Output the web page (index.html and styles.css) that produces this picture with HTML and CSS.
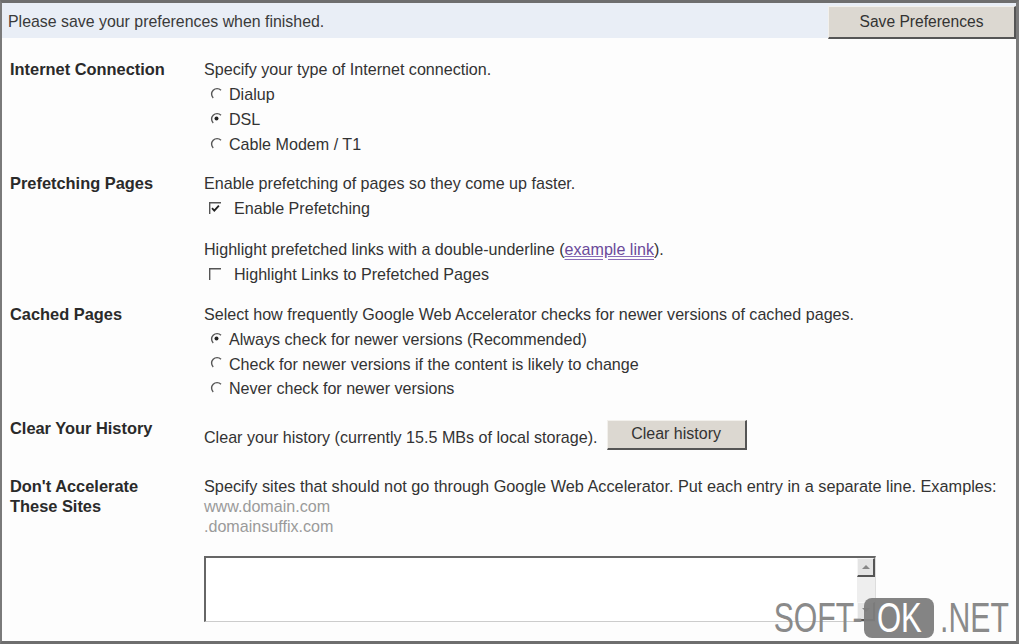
FILE: index.html
```html
<!DOCTYPE html>
<html>
<head>
<meta charset="utf-8">
<link rel="stylesheet" href="styles.css">
</head>
<body>
<div class="frame">
  <div class="topbar">
    <span class="topnote">Please save your preferences when finished.</span>
    <button class="btn btn-save">Save Preferences</button>
  </div>

  <div class="section s-conn">
    <div class="label">Internet Connection</div>
    <div class="content">
      <div class="desc">Specify your type of Internet connection.</div>
      <div class="opt"><svg class="radio" viewBox="0 0 13 13"><path d="M11 3.2A5.5 5.5 0 1 0 3.2 11" fill="none" stroke="#555" stroke-width="1.4"/></svg><span>Dialup</span></div>
      <div class="opt"><svg class="radio" viewBox="0 0 13 13"><path d="M11 3.2A5.5 5.5 0 1 0 3.2 11" fill="none" stroke="#555" stroke-width="1.4"/><circle cx="6.5" cy="6.5" r="2" fill="#222"/></svg><span>DSL</span></div>
      <div class="opt"><svg class="radio" viewBox="0 0 13 13"><path d="M11 3.2A5.5 5.5 0 1 0 3.2 11" fill="none" stroke="#555" stroke-width="1.4"/></svg><span>Cable Modem / T1</span></div>
    </div>
  </div>

  <div class="section s-pref">
    <div class="label">Prefetching Pages</div>
    <div class="content">
      <div class="desc">Enable prefetching of pages so they come up faster.</div>
      <div class="opt chk"><svg class="check" viewBox="0 0 13 13"><path d="M0.7 12V0.7H12" fill="none" stroke="#555" stroke-width="1.4"/><path d="M3 6.2l2.3 2.4 4.6-5" fill="none" stroke="#222" stroke-width="1.8"/></svg><span>Enable Prefetching</span></div>
      <div class="desc gap">Highlight prefetched links with a double-underline (<a class="exlink" href="#">example link</a>).</div>
      <div class="opt chk"><svg class="check" viewBox="0 0 13 13"><path d="M0.7 12V0.7H12" fill="none" stroke="#555" stroke-width="1.4"/></svg><span>Highlight Links to Prefetched Pages</span></div>
    </div>
  </div>

  <div class="section s-cache">
    <div class="label">Cached Pages</div>
    <div class="content tight">
      <div class="desc">Select how frequently Google Web Accelerator checks for newer versions of cached pages.</div>
      <div class="opt"><svg class="radio" viewBox="0 0 13 13"><path d="M11 3.2A5.5 5.5 0 1 0 3.2 11" fill="none" stroke="#555" stroke-width="1.4"/><circle cx="6.5" cy="6.5" r="2" fill="#222"/></svg><span>Always check for newer versions (Recommended)</span></div>
      <div class="opt"><svg class="radio" viewBox="0 0 13 13"><path d="M11 3.2A5.5 5.5 0 1 0 3.2 11" fill="none" stroke="#555" stroke-width="1.4"/></svg><span>Check for newer versions if the content is likely to change</span></div>
      <div class="opt"><svg class="radio" viewBox="0 0 13 13"><path d="M11 3.2A5.5 5.5 0 1 0 3.2 11" fill="none" stroke="#555" stroke-width="1.4"/></svg><span>Never check for newer versions</span></div>
    </div>
  </div>

  <div class="section s-clear">
    <div class="label">Clear Your History</div>
    <div class="content clearrow">
      <span class="cleartext">Clear your history (currently 15.5 MBs of local storage).</span>
      <button class="btn btn-clear">Clear history</button>
    </div>
  </div>

  <div class="section s-sites">
    <div class="label l2">Don't Accelerate<br>These Sites</div>
    <div class="content c2">
      <div class="sitesdesc">Specify sites that should not go through Google Web Accelerator. Put each entry in a separate line. Examples:</div>
      <div class="example">www.domain.com</div>
      <div class="example">.domainsuffix.com</div>
      <div class="textarea">
        <div class="ta-body"></div>
        <div class="scrollbar">
          <div class="sb-btn"><svg viewBox="0 0 8 5" width="8" height="5"><path d="M0 5L4 1L8 5Z" fill="#888"/></svg></div>
          <div class="sb-track"></div>
          <div class="sb-btn"><svg viewBox="0 0 8 5" width="8" height="5"><path d="M0 0L4 4L8 0Z" fill="#888"/></svg></div>
        </div>
      </div>
    </div>
  </div>

  <div class="watermark"><span class="wm-soft">SOFT-</span><span class="wm-ok"><span class="wm-ok-text">OK</span></span><span class="wm-net">.NET</span></div>
</div>
</body>
</html>
```

FILE: styles.css
```css
html, body {
  margin: 0;
  padding: 0;
  background: #ffffff;
}

body {
  font-family: "Liberation Sans", Arial, sans-serif;
  font-size: 16px;
  color: #333333;
  width: 1020px;
  height: 644px;
  overflow: hidden;
}

.frame {
  position: relative;
  box-sizing: border-box;
  width: 1019px;
  height: 644px;
  border-top: 3px solid #6e6e6e;
  border-left: 2px solid #7a7a7a;
  border-right: 3px solid #7a7a7a;
  border-bottom: 3px solid #6e6e6e;
  overflow: hidden;
  background: #fdfdfd;
}

.topbar {
  display: flex;
  align-items: center;
  justify-content: space-between;
  height: 35px;
  background: #e9eef6;
  padding: 0 0 0 6px;
}

.topnote {
  color: #3a3a3a;
  font-size: 15.9px;
  padding-top: 3px;
}

.btn {
  font-family: "Liberation Sans", Arial, sans-serif;
  font-size: 15.6px;
  color: #333;
  background: #dcd8d1;
  border: 1px solid #b8b4ad;
  border-right: 2px solid #555;
  border-bottom: 2px solid #555;
  border-top-color: #f2f0ec;
  border-left-color: #f2f0ec;
  padding: 0;
  margin: 0;
}

.btn-save {
  width: 188px;
  height: 33px;
  margin-top: 3px;
}

.section {
  display: grid;
  grid-template-columns: 194px 1fr;
  padding-left: 8px;
  line-height: 25px;
}

.label {
  font-weight: bold;
  color: #2a2a2a;
  font-size: 16.4px;
}

.content {
  color: #333;
  font-size: 16.1px;
}

.tight .opt {
  line-height: 24.5px;
}

.s-conn { margin-top: 19px; }
.s-pref { margin-top: 14px; }
.s-cache { margin-top: 15px; }
.s-clear { margin-top: 15px; }
.s-sites { margin-top: 26px; }

.opt {
  display: flex;
  align-items: center;
  padding-left: 6px;
}

.radio {
  width: 13px;
  height: 13px;
  margin-right: 6px;
  flex: none;
  position: relative;
  top: -1px;
}

.chk { padding-left: 5px; }

.check {
  width: 13px;
  height: 13px;
  margin-right: 12px;
  flex: none;
}

.desc.gap { margin-top: 16px; }

.exlink {
  color: #6b4a9a;
  text-decoration: underline double;
  text-decoration-color: #8a6cb8;
}

.clearrow {
  display: flex;
  align-items: center;
  margin-top: 4px;
}

.cleartext {
  margin-top: 5px;
}

.btn-clear {
  width: 140px;
  height: 30px;
  margin-left: 9px;
  font-size: 16px;
}

.s-clear .label {
  align-self: start;
}

.l2, .c2 {
  line-height: 20px;
}

.sitesdesc {
  font-size: 16.3px;
  white-space: nowrap;
}

.example {
  color: #9a9a9a;
}

.textarea {
  display: flex;
  width: 672px;
  height: 66px;
  margin-top: 20px;
  box-sizing: border-box;
  border-top: 2px solid #666;
  border-left: 2px solid #666;
  border-right: 1px solid #ddd;
  border-bottom: 1px solid #ccc;
  background: #fff;
}

.ta-body {
  flex: 1;
}

.scrollbar {
  width: 18px;
  display: flex;
  flex-direction: column;
  background: #ececec;
}

.sb-btn {
  height: 19px;
  box-sizing: border-box;
  background: #e4e4e4;
  border: 1px solid #f5f5f5;
  border-right: 2px solid #555;
  border-bottom: 2px solid #555;
  display: flex;
  align-items: center;
  justify-content: center;
}

.sb-track {
  flex: 1;
  background: #eeeeee;
}

.watermark {
  position: absolute;
  right: 5px;
  bottom: 3px;
  display: flex;
  align-items: center;
  font-family: "Liberation Sans", Arial, sans-serif;
  font-size: 42px;
  line-height: 40px;
  color: #8c8c8c;
}

.wm-soft,
.wm-net {
  display: inline-block;
  color: #8a8a8a;
  transform: scaleX(0.72);
}

.wm-soft {
  transform-origin: right center;
  margin-left: -30px;
}

.wm-net {
  transform-origin: left center;
  margin-right: -25px;
}

.wm-ok {
  display: flex;
  align-items: center;
  justify-content: center;
  width: 70px;
  height: 40px;
  box-sizing: border-box;
  background: rgba(125, 125, 125, 0.95);
  color: #ffffff;
  border-radius: 8px;
  margin: 0 6px 0 2px;
}

.wm-ok-text {
  display: inline-block;
  transform: scaleX(0.74);
  white-space: nowrap;
}
```
